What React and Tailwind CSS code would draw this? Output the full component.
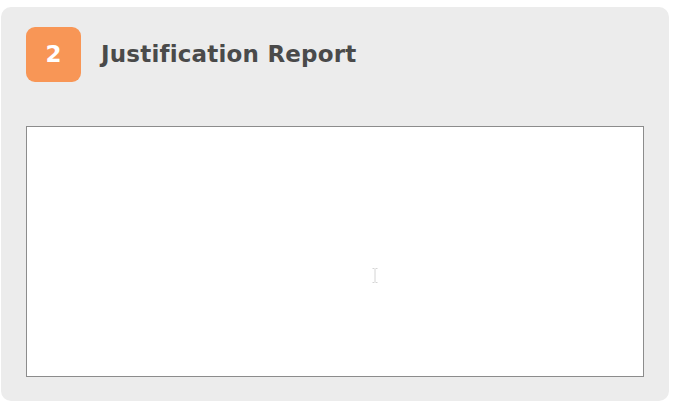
export default function App() {
  return (
    <div className="w-[676px] h-[406px] bg-white pt-[7px] pl-px" style={{ fontFamily: '"DejaVu Sans", Inter, sans-serif' }}>
      <div className="w-[668px] h-[394px] bg-[#ececec] rounded-[10px] px-[25px] pt-[20px] pb-[24px] flex flex-col">
        <div className="flex items-center gap-[20px]">
          <div className="w-[55px] h-[55px] rounded-[9px] bg-[#f89656] flex items-center justify-center text-white text-[23px] font-bold">
            2
          </div>
          <h2 className="text-[23px] font-bold text-[#4a4a4a] tracking-[0.2px] leading-none">Justification Report</h2>
        </div>
        <div className="relative mt-[44px] flex-1 bg-white border border-[#8c8c8c]">
          {/* text cursor */}
          <svg className="absolute left-[345px] top-[141px]" width="6" height="15" viewBox="0 0 6 15" fill="none" stroke="#d4d4d4" strokeWidth="1">
            <path d="M0.5 0.5h2m1 0h2M3 1v13M0.5 14.5h2m1 0h2" />
          </svg>
        </div>
      </div>
    </div>
  )
}
